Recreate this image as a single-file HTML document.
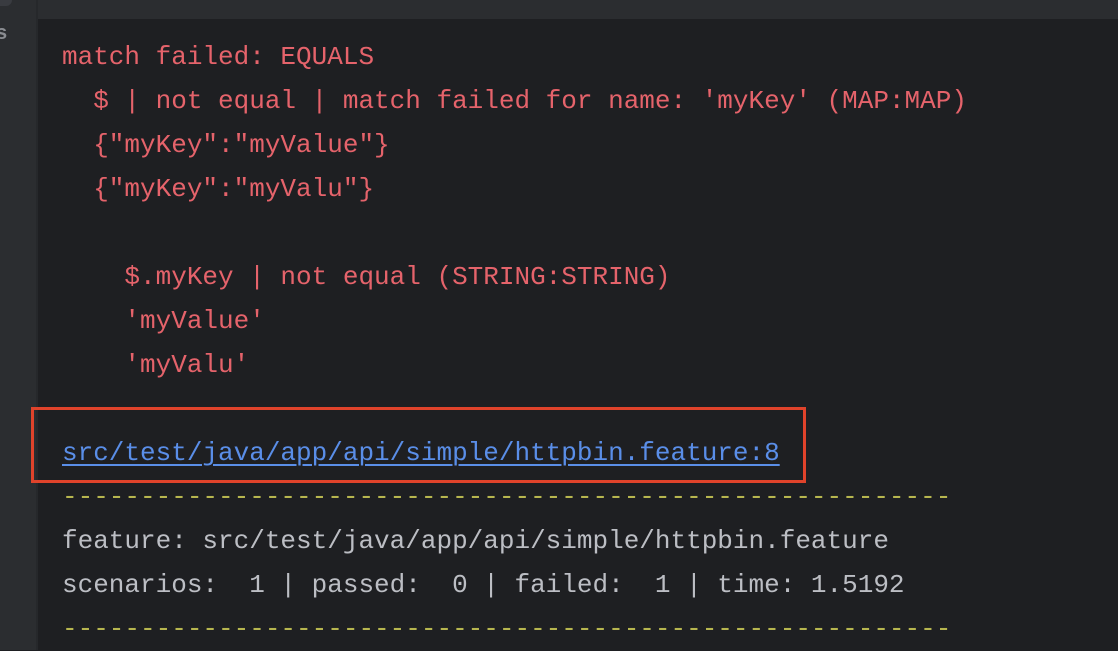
<!DOCTYPE html>
<html><head><meta charset="utf-8"><style>
html,body{margin:0;padding:0;width:1118px;height:650px;overflow:hidden;background:#1e1f22;}
.side{position:absolute;left:0;top:0;width:36px;height:650px;background:#2b2d30;}
.side .t{position:absolute;left:0;top:0;width:12px;height:6px;background:#393b40;border-radius:0 0 6px 0;}
.side .s{position:absolute;left:-4px;top:22px;color:#8a8c91;font:bold 20px "Liberation Sans",sans-serif;}
.sep{position:absolute;left:36px;top:0;width:2px;height:650px;background:#26282b;}
.top{position:absolute;left:38px;top:0;width:1080px;height:19px;background:#2b2d30;}
.c{position:absolute;left:62px;top:0;font-family:"Liberation Mono",monospace;font-size:26px;white-space:pre;}
.l{position:absolute;left:0;height:44px;line-height:44px;}
.r{color:#e5636b}.g{color:#bcbec4}.y{color:#b7b64f}
.a{color:#5a8ee8;text-decoration:underline;text-underline-offset:4px;text-decoration-thickness:2px}
.box{position:absolute;left:31px;top:407px;width:769px;height:70px;border:3px solid #e0432b;}
</style></head><body>
<div class="side"><div class="t"></div><div class="s">s</div></div>
<div class="sep"></div>
<div class="top"></div>
<div class="c">
<div class="l r" style="top:35px">match failed: EQUALS</div>
<div class="l r" style="top:79px">  $ | not equal | match failed for name: 'myKey' (MAP:MAP)</div>
<div class="l r" style="top:123px">  {"myKey":"myValue"}</div>
<div class="l r" style="top:167px">  {"myKey":"myValu"}</div>
<div class="l r" style="top:255px">    $.myKey | not equal (STRING:STRING)</div>
<div class="l r" style="top:299px">    'myValue'</div>
<div class="l r" style="top:343px">    'myValu'</div>
<div class="l a" style="top:431px">src/test/java/app/api/simple/httpbin.feature:8</div>
<div class="l y" style="top:475px">---------------------------------------------------------</div>
<div class="l g" style="top:519px">feature: src/test/java/app/api/simple/httpbin.feature</div>
<div class="l g" style="top:563px">scenarios:  1 | passed:  0 | failed:  1 | time: 1.5192</div>
<div class="l y" style="top:607px">---------------------------------------------------------</div>
</div>
<div class="box"></div>
</body></html>
